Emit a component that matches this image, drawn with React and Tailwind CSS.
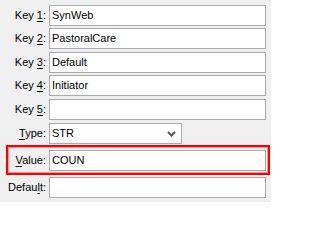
import React from "react";

const font = { fontFamily: '"Liberation Sans", Tahoma, sans-serif' };

function Label({ pre, u, post, w = "w-[46px]" }) {
  return (
    <div className={`${w} shrink-0 text-right pr-[3px] text-[11px] text-black leading-none`}>
      {pre}
      <span className="underline underline-offset-[2px]">{u}</span>
      {post}
    </div>
  );
}

function Input({ value }) {
  return (
    <div className="h-[21px] w-[217px] border border-[#ababab] bg-white flex items-center pl-[2px] text-[11px] text-black leading-none">
      {value}
    </div>
  );
}

export default function App() {
  return (
    <div
      className="w-[271px] h-[202px] bg-[#f0f0f0] flex flex-col overflow-hidden"
      style={font}
    >
      <div className="flex items-center mt-[5px] ml-[3px]">
        <Label pre="Key " u="1" post=":" />
        <Input value="SynWeb" />
      </div>
      <div className="flex items-center mt-[2px] ml-[3px]">
        <Label pre="Key " u="2" post=":" />
        <Input value="PastoralCare" />
      </div>
      <div className="flex items-center mt-[3px] ml-[3px]">
        <Label pre="Key " u="3" post=":" />
        <Input value="Default" />
      </div>
      <div className="flex items-center mt-[2px] ml-[3px]">
        <Label pre="Key " u="4" post=":" />
        <Input value="Initiator" />
      </div>
      <div className="flex items-center mt-[3px] ml-[3px]">
        <Label pre="Key " u="5" post=":" />
        <Input value="" />
      </div>
      <div className="flex items-center mt-[3px] ml-[3px]">
        <Label pre="" u="T" post="ype:" />
        <div className="h-[21px] w-[133px] border border-[#ababab] bg-white flex items-center justify-between pl-[2px] pr-[5px] text-[11px] text-black leading-none">
          <span>STR</span>
          <svg width="9" height="6" viewBox="0 0 9 6">
            <path d="M1 1 L4.5 4.5 L8 1" stroke="#555" strokeWidth="2" fill="none" />
          </svg>
        </div>
      </div>
      <div className="mt-[1px] ml-[6px] w-[264px] h-[30px] border-2 border-[#ff0000] shadow-[inset_0_0_0_1px_#ff9a9a] flex items-center">
        <Label pre="" u="V" post="alue:" w="w-[41px]" />
        <Input value="COUN" />
      </div>
      <div className="flex items-center mt-[2px] ml-[3px]">
        <Label pre="Defau" u="l" post="t:" />
        <Input value="" />
      </div>
    </div>
  );
}
